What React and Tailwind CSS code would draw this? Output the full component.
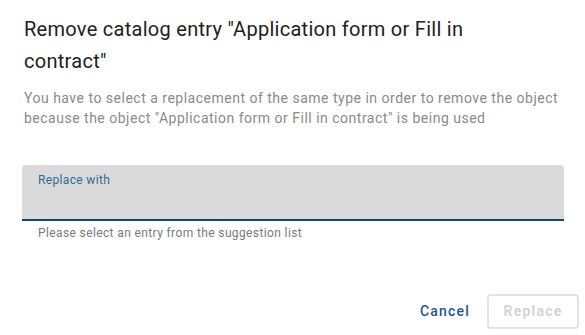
export default function App() {
  return (
    <div
      className="w-[585px] h-[335px] bg-white flex flex-col px-[22px] pt-[13px]"
      style={{ fontFamily: "Roboto, 'Liberation Sans', sans-serif" }}
    >
      {/* Title */}
      <h2 className="pl-[2px] pr-[80px] text-[20px] leading-[32px] font-normal tracking-[0.28px] text-[#212121]">
        Remove catalog entry "Application form or Fill in contract"
      </h2>

      {/* Message */}
      <p className="pl-[2px] mt-[11px] text-[14px] leading-[20px] tracking-[0.5px] text-[#8a8a8a]">
        You have to select a replacement of the same type in order to remove the object because the object "Application form or Fill in contract" is being used
      </p>

      {/* Field */}
      <div className="mt-[37px] w-[542px]">
        <div className="h-[56px] bg-[#dadada] rounded-t-[4px] border-b-2 border-[#0b4a74] px-4 pt-[7px]">
          <div className="text-[12px] leading-[16px] tracking-[0.35px] text-[#2f6a96]">Replace with</div>
        </div>
        <div className="px-4 pt-[4px] text-[12px] leading-[16px] tracking-[0.38px] text-[#7a7a7a]">
          Please select an entry from the suggestion list
        </div>
      </div>

      {/* Actions */}
      <div className="mt-auto mb-[6px] flex items-center justify-end gap-[9px] -mr-[16px]">
        <button className="h-[36px] px-[8px] text-[14px] font-medium tracking-[1.2px] text-[#1b5a88]">
          Cancel
        </button>
        <button
          disabled
          className="h-[35px] w-[92px] rounded-[4px] border-2 border-[#e3e3e3] text-[14px] font-bold tracking-[1.2px] text-[#d4d4d4]"
        >
          Replace
        </button>
      </div>
    </div>
  );
}
